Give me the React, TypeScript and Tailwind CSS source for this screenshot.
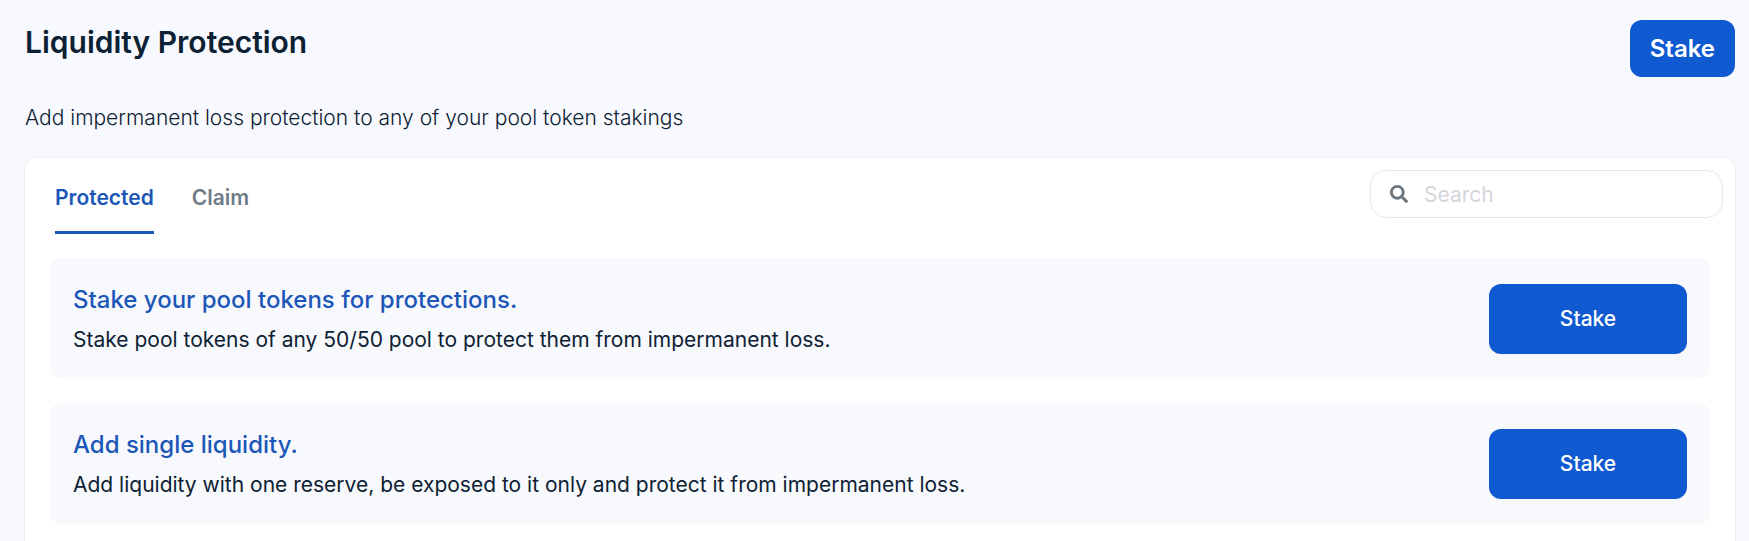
import { useState } from 'react';
import { FaSearch } from 'react-icons/fa';

const tabs = ['Protected', 'Claim'];

const options = [
    {
        title: 'Stake your pool tokens for protections.',
        description: 'Stake pool tokens of any 50/50 pool to protect them from impermanent loss.',
    },
    {
        title: 'Add single liquidity.',
        description: 'Add liquidity with one reserve, be exposed to it only and protect it from impermanent loss.',
    },
];

interface ProtectionCardProps {
    title: string;
    description: string;
}

const ProtectionCard = ({ title, description }: ProtectionCardProps) => (
    <div className="flex items-center justify-between gap-6 rounded-xl bg-[#f8f9fd] px-[23px] pt-[25px] pb-6">
        <div>
            <h2 className="text-[24px] leading-[34px] font-medium text-[#1c57b8]">{title}</h2>
            <p className="mt-2 text-[21px] leading-[30px] text-[#0d2134]">{description}</p>
        </div>
        <button className="h-[70px] w-[198px] shrink-0 rounded-xl bg-[#0f59d1] text-[21px] font-medium text-white">
            Stake
        </button>
    </div>
);

export default function App() {
    const [activeTab, setActiveTab] = useState<string>('Protected');
    const [search, setSearch] = useState<string>('');

    return (
        <div className="flex min-h-screen flex-col bg-[#f8f9fe] pt-5 pr-3.5 pl-[25px] font-['Inter',sans-serif] text-[#0d2134]">
            <div className="flex items-start justify-between"> {/* Heading */}
                <h1 className="text-[30px] leading-[45px] font-semibold">Liquidity Protection</h1>
                <button className="h-[57px] rounded-xl bg-[#0f59d1] px-5 text-[24px] font-semibold text-white">
                    Stake
                </button>
            </div>
            <p className="mt-[25px] text-[21px] leading-8 font-light">
                Add impermanent loss protection to any of your pool token stakings
            </p>

            <div className="mt-6 flex-1 rounded-t-xl bg-white px-[25px] pb-[25px] shadow-sm">
                <div className="-mr-[13px] flex items-start justify-between pt-3"> {/* Tabs and search */}
                    <div className="flex gap-[38px] pl-[5px]">
                        {tabs.map((tab) => (
                            <button
                                key={tab}
                                onClick={() => setActiveTab(tab)}
                                className={`border-b-3 pt-[13px] pb-[19px] text-[21px] leading-[29px] font-semibold ${
                                    tab === activeTab
                                        ? 'border-[#1c57b8] text-[#1c57b8]'
                                        : 'border-transparent text-[#6f7c88]'
                                }`}
                            >
                                {tab}
                            </button>
                        ))}
                    </div>
                    <label className="flex h-12 w-[353px] items-center gap-4 rounded-2xl border border-[#e6e8ec] px-[19px]">
                        <FaSearch className="size-[18px] shrink-0 text-[#6b7780]" />
                        <input
                            type="text"
                            aria-label="Search"
                            placeholder="Search"
                            value={search}
                            onChange={(e) => setSearch(e.target.value)}
                            className="w-full min-w-0 pt-0.5 text-[21px] outline-none placeholder:text-[#d3d6dc]"
                        />
                    </label>
                </div>

                <div className="mt-6 flex flex-col gap-6">
                    {options.map((option) => (
                        <ProtectionCard key={option.title} title={option.title} description={option.description} />
                    ))}
                </div>
            </div>
        </div>
    );
}
